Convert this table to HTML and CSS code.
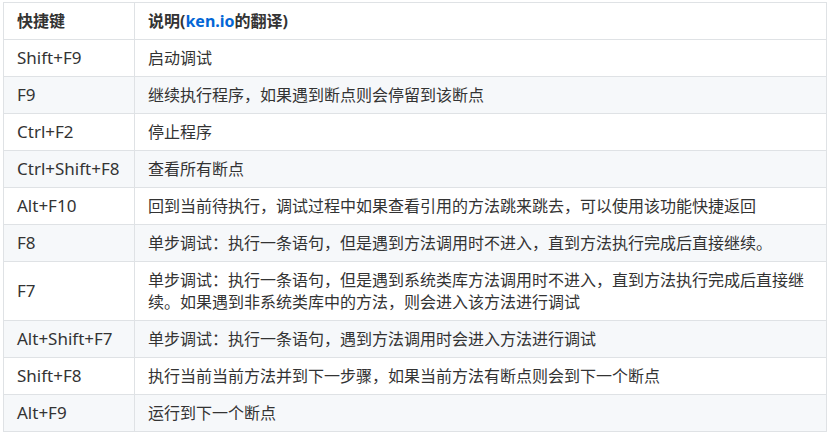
FILE: index.html
```html
<!DOCTYPE html>
<html lang="zh-CN">
<head>
  <meta charset="UTF-8" />
  <meta name="viewport" content="width=device-width, initial-scale=1.0"/>
  <title>调试快捷键</title>
  <link rel="stylesheet" href="styles.css">
</head>
<body>

  <!-- 调试快捷键表 -->
  <table class="keys">
    <thead>
      <tr>
        <th class="key-col">快捷键</th>
        <th>说明(<a href="#">ken.io</a>的翻译)</th>
      </tr>
    </thead>
    <tbody>
      <tr><td>Shift+F9</td><td>启动调试</td></tr>
      <tr><td>F9</td><td>继续执行程序，如果遇到断点则会停留到该断点</td></tr>
      <tr><td>Ctrl+F2</td><td>停止程序</td></tr>
      <tr><td>Ctrl+Shift+F8</td><td>查看所有断点</td></tr>
      <tr><td>Alt+F10</td><td>回到当前待执行，调试过程中如果查看引用的方法跳来跳去，可以使用该功能快捷返回</td></tr>
      <tr><td>F8</td><td>单步调试：执行一条语句，但是遇到方法调用时不进入，直到方法执行完成后直接继续。</td></tr>
      <tr><td>F7</td><td>单步调试：执行一条语句，但是遇到系统类库方法调用时不进入，直到方法执行完成后直接继续。如果遇到非系统类库中的方法，则会进入该方法进行调试</td></tr>
      <tr><td>Alt+Shift+F7</td><td>单步调试：执行一条语句，遇到方法调用时会进入方法进行调试</td></tr>
      <tr><td>Shift+F8</td><td>执行当前当前方法并到下一步骤，如果当前方法有断点则会到下一个断点</td></tr>
      <tr><td>Alt+F9</td><td>运行到下一个断点</td></tr>
    </tbody>
  </table>

</body>
</html>
```

FILE: styles.css
```css
body {
  font-family: "Noto Sans", "Noto Sans CJK SC", sans-serif;
  font-size: 16px;
  color: #333;
  background: #fff;
  margin: 0;
  padding: 2px 3px;
}
.keys {
  width: 824px;
  border-collapse: collapse;
}
.keys th,
.keys td {
  border: 1px solid #dfe2e5;
  padding: 7px 13px;
  line-height: 22px;
  text-align: left;
  vertical-align: middle;
}
.keys th {
  font-weight: bold;
}
.keys .key-col {
  width: 104px;
}
.keys td:first-child {
  font-size: 17px;
}
.keys td:last-child {
  padding-right: 16px;
}
.keys a {
  color: #0366d6;
  text-decoration: none;
}
.keys tbody tr:nth-child(2n) {
  background: #f6f8fa;
}
```
